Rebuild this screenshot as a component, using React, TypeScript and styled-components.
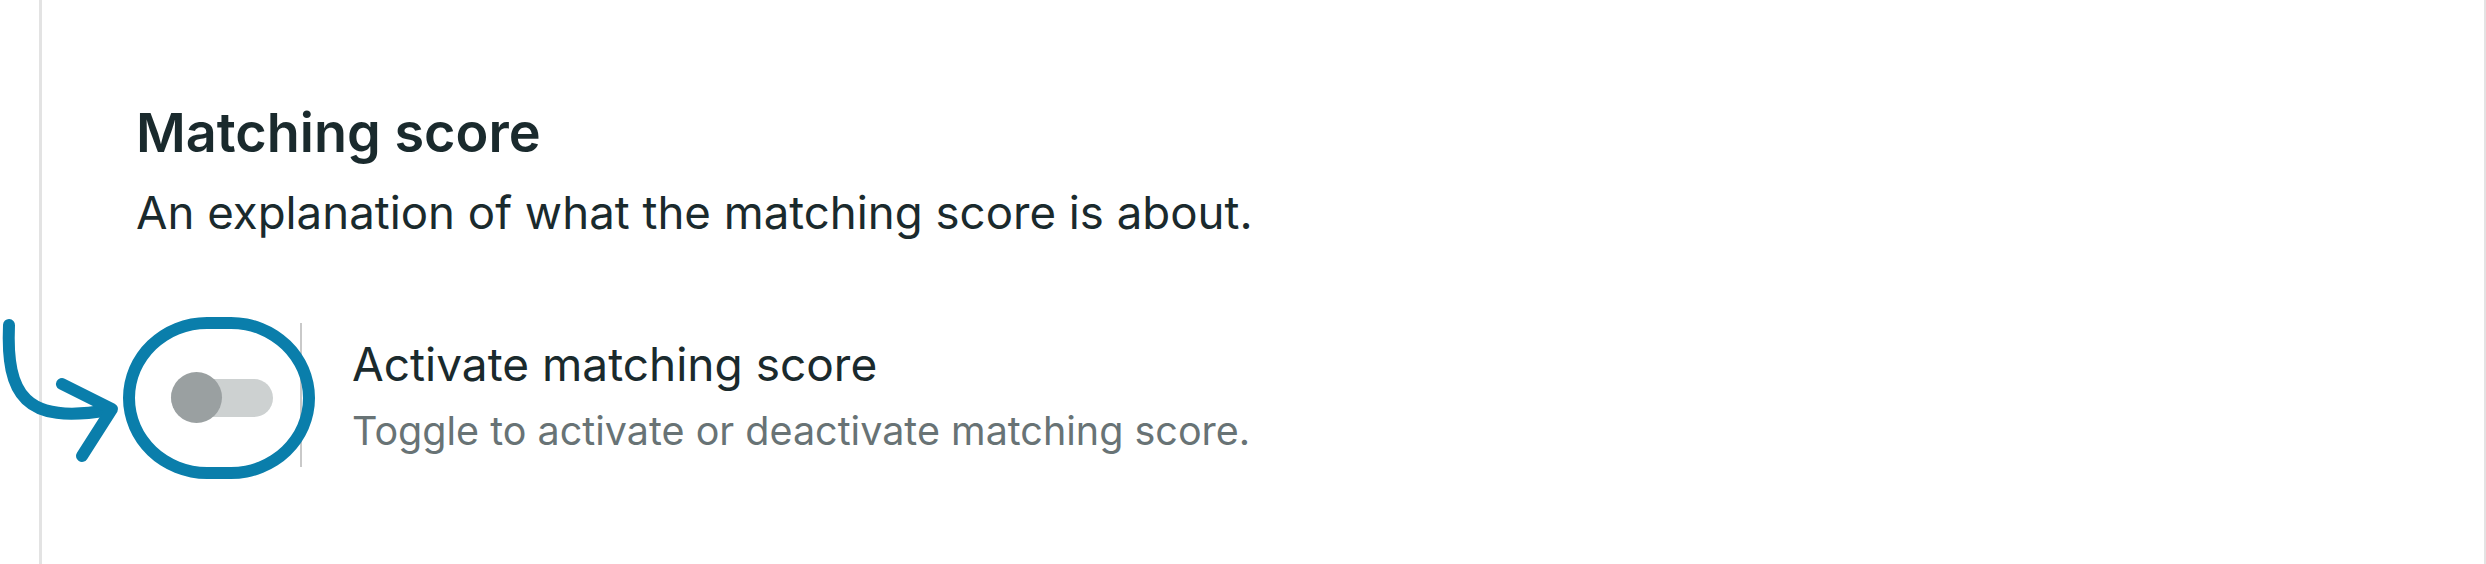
import React from "react";
import styled, { createGlobalStyle } from "styled-components";

const GlobalStyle = createGlobalStyle`
  html, body {
    margin: 0;
    padding: 0;
    background: #ffffff;
  }
  body {
    font-family: Inter, "Noto Sans", "Liberation Sans", sans-serif;
    -webkit-font-smoothing: antialiased;
  }
  * { box-sizing: border-box; }
`;

const Page = styled.div`
  position: relative;
  width: 2486px;
  height: 564px;
  overflow: hidden;
`;

const Frame = styled.section`
  margin-left: 39px;
  width: 2447px;
  height: 564px;
  border-left: 3px solid #e3e3e3;
  border-right: 2px solid #e3e3e3;
  padding: 101px 0 0 94px;
  background: #ffffff;
`;

const Heading = styled.h2`
  margin: 0;
  font-size: 54px;
  line-height: 64px;
  font-weight: 600;
  color: #1a2a2d;
`;

const Lead = styled.p`
  margin: 16px 0 0;
  font-size: 45.6px;
  line-height: 64px;
  font-weight: 400;
  color: #1a2a2d;
`;

const SettingRow = styled.div`
  position: relative;
  margin-top: 78px;
  display: flex;
  align-items: flex-start;
`;

const SwitchCell = styled.div`
  width: 166px;
  height: 144px;
  border-right: 2px solid #c9c9c9;
  padding: 5px 0 0 8px;
  display: flex;
  align-items: center;
  justify-content: center;
`;

const Track = styled.button<{ $on?: boolean }>`
  position: relative;
  width: 102px;
  height: 38px;
  padding: 0;
  border: none;
  border-radius: 19px;
  background: ${(p) => (p.$on ? "#0a7eab" : "#cdd1d1")};
  cursor: pointer;
`;

const Knob = styled.span<{ $on?: boolean }>`
  position: absolute;
  top: -7px;
  left: ${(p) => (p.$on ? "51px" : "0px")};
  width: 51px;
  height: 51px;
  border-radius: 50%;
  background: #9aa0a1;
`;

const FocusRing = styled.span`
  position: absolute;
  left: -13px;
  top: -6px;
  width: 192px;
  height: 162px;
  border: 12px solid #0a7eab;
  border-radius: 84px / 81px;
  pointer-events: none;
`;

const SettingText = styled.div`
  margin-left: 50px;
  padding-top: 9px;
  display: flex;
  flex-direction: column;
`;

const SettingLabel = styled.span`
  font-size: 46px;
  line-height: 64px;
  font-weight: 400;
  color: #1a2a2d;
`;

const SettingHint = styled.span`
  margin-top: 7px;
  font-size: 39.5px;
  line-height: 56px;
  font-weight: 400;
  color: #687375;
`;

const Annotation = styled.svg`
  position: absolute;
  left: 0;
  top: 300px;
  width: 130px;
  height: 180px;
  overflow: visible;
  pointer-events: none;
`;

export default function App() {
  return (
    <Page>
      <GlobalStyle />
      <Frame>
        <Heading>Matching score</Heading>
        <Lead>An explanation of what the matching score is about.</Lead>
        <SettingRow>
          <SwitchCell>
            <Track role="switch" aria-checked={false} aria-label="Activate matching score">
              <Knob />
            </Track>
          </SwitchCell>
          <FocusRing />
          <SettingText>
            <SettingLabel>Activate matching score</SettingLabel>
            <SettingHint>Toggle to activate or deactivate matching score.</SettingHint>
          </SettingText>
        </SettingRow>
      </Frame>
      <Annotation viewBox="0 0 130 180">
        <path
          d="M9 25 C6 95, 25 125, 108 110"
          fill="none"
          stroke="#0a7eab"
          strokeWidth="12"
          strokeLinecap="round"
        />
        <path
          d="M62 84 L112 109 L82 156"
          fill="none"
          stroke="#0a7eab"
          strokeWidth="12"
          strokeLinecap="round"
          strokeLinejoin="round"
        />
      </Annotation>
    </Page>
  );
}
